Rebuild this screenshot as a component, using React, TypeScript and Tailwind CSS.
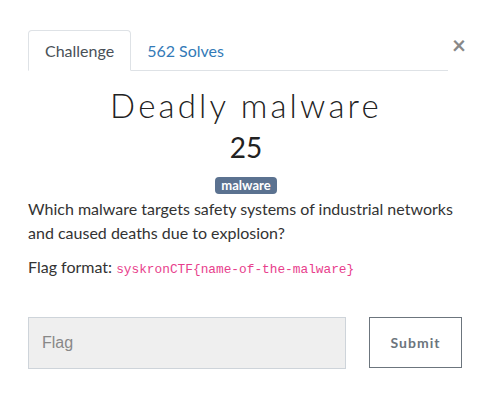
import React from "react";

export default function App() {
  return (
    <div className="w-[492px] h-[415px] bg-white font-['Lato','Noto_Sans',sans-serif] text-[#212529]">
      <div className="pl-[28px] pr-[28px] pt-[30px]">
        {/* tabs */}
        <div className="flex items-start">
          <div className="flex flex-1 border-b border-[#dee2e6] h-[41px]">
            <div className="h-[41px] px-[16px] border border-b-white border-[#dee2e6] rounded-t-[4px] bg-white flex items-center text-[16px] text-[#495057] mb-[-1px]">
              Challenge
            </div>
            <div className="h-[41px] px-[16px] flex items-center text-[16px] text-[#337ab7]">
              562 Solves
            </div>
          </div>
          <div className="w-[16px] shrink-0 flex justify-end">
            <span className="text-[24px] leading-none text-[#888] font-bold mt-[3px] mr-[-2px]">×</span>
          </div>
        </div>

        {/* body */}
        <div className="flex flex-col items-center">
          <h1 className="mt-[14px] text-[33px] leading-[40px] font-light tracking-[3.2px] text-[#222]">Deadly malware</h1>
          <div className="mt-[5px] text-[28px] leading-[34px] font-normal text-[#222]">25</div>
          <span className="mt-[13px] h-[17px] px-[6px] rounded-[4px] bg-[#5b7290] text-white text-[13px] font-bold leading-[17px]">malware</span>
        </div>
        <p className="mt-[3px] text-[16px] leading-[24px] text-[#333]">
          Which malware targets safety systems of industrial networks and caused deaths due to explosion?
        </p>
        <p className="mt-[10px] text-[16px] leading-[24px] text-[#333]">
          Flag format: <code className="font-['Liberation_Mono',monospace] text-[12.8px] text-[#e83e8c]">syskronCTF{"{"}name-of-the-malware{"}"}</code>
        </p>

        <div className="mt-[35px] flex items-start">
          <div className="w-[318px] h-[52px] bg-[#efefef] border border-[#ced4da] flex items-center pl-[13px] font-['Liberation_Sans',sans-serif] text-[16px] text-[#888]">
            Flag
          </div>
          <div className="ml-[23px] w-[93px] h-[51px] border border-[#6c757d] flex items-center justify-center text-[14px] font-bold tracking-[1px] text-[#6c757d]">
            Submit
          </div>
        </div>
      </div>
    </div>
  );
}
